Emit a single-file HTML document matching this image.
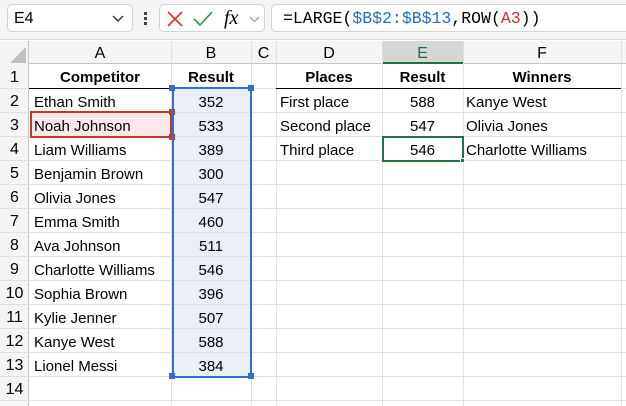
<!DOCTYPE html>
<html><head><meta charset="utf-8"><style>
body{margin:0;width:626px;height:406px;overflow:hidden;background:#fff;font-family:"Liberation Sans",sans-serif;position:relative}
.a{position:absolute;box-sizing:border-box}
.box{background:#fff;border:1px solid #d4d4d4;border-radius:5px}
.t{position:absolute;font-size:15px;line-height:24px;color:#000;white-space:nowrap}
.c{text-align:center}
.b{font-weight:bold}
</style></head><body>
<div class="a" style="left:0;top:0;width:626px;height:40px;background:#f5f5f5;border-bottom:1px solid #dcdcdc"></div>
<div class="a box" style="left:7px;top:4px;width:126px;height:28px"></div>
<div class="t" style="left:14px;top:7px;font-size:16px">E4</div>
<svg class="a" style="left:112px;top:15px" width="12" height="8"><path d="M1 1l5 5 5-5" stroke="#333" stroke-width="1.4" fill="none"/></svg>
<div class="a" style="left:144px;top:12px;width:3px;height:3px;background:#444;box-shadow:0 5px 0 #444,0 10px 0 #444"></div>
<div class="a box" style="left:159px;top:4px;width:106px;height:28px"></div>
<svg class="a" style="left:167px;top:11px" width="16" height="16"><path d="M1 1l14 14M15 1L1 15" stroke="#e03030" stroke-width="1.6"/></svg>
<svg class="a" style="left:193px;top:11px" width="20" height="15"><path d="M1 8l6 6L19 1" stroke="#2e9a48" stroke-width="1.6" fill="none"/></svg>
<div class="t" style="left:224px;top:6px;font-family:'Liberation Serif',serif;font-style:italic;font-size:20px">fx</div>
<svg class="a" style="left:249px;top:16px" width="11" height="7"><path d="M1 1l4.5 4.5L10 1" stroke="#999" stroke-width="1.2" fill="none"/></svg>
<div class="a box" style="left:271px;top:4px;width:360px;height:28px"></div>
<div class="t" style="left:283px;top:7px;font-size:16.5px;font-family:'Liberation Mono',monospace">=LARGE(<span style="color:#1f6fc8">$B$2:$B$13</span>,ROW(<span style="color:#c8323c">A3</span>))</div>

<div class="a" style="left:0;top:41px;width:626px;height:23px;background:#f5f5f5;border-bottom:1px solid #c6c6c6"></div>
<div class="a" style="left:0;top:41px;width:29px;height:365px;background:#f5f5f5;border-right:1px solid #c6c6c6"></div>
<svg class="a" style="left:10px;top:47px" width="16" height="16"><path d="M16 0V16H0Z" fill="#c0c0c0"/></svg>
<div class="a" style="left:382px;top:41px;width:81px;height:23px;background:#d6d6d6;border-bottom:2px solid #217346"></div>
<div id="g"></div>
<script>
var cols=[[29,171,'A'],[171,251,'B'],[251,276,'C'],[276,382,'D'],[382,463,'E'],[463,621,'F'],[621,700,'']];
var h='';
h+='<div class="a" style="left:172px;top:89px;width:80px;height:288px;background:#e9eef7"></div>';
h+='<div class="a" style="left:30px;top:113px;width:142px;height:24px;background:#fbe9ea"></div>';
for(var i=0;i<cols.length;i++){var c=cols[i];
 h+='<div class="t c" style="left:'+c[0]+'px;top:42px;width:'+(c[1]-c[0])+'px;line-height:23px;font-size:16px;color:'+(c[2]=='E'?'#217346':'#000')+'">'+c[2]+'</div>';
 h+='<div class="a" style="left:'+c[1]+'px;top:41px;width:1px;height:365px;background:#e0e0e0"></div>';}
for(var r=1;r<=14;r++){var y=64+24*r;
 h+='<div class="a" style="left:0;top:'+y+'px;width:626px;height:1px;background:#e0e0e0"></div>';
 h+='<div class="t c" style="left:0;top:'+(y-22)+'px;width:29px;font-size:16px">'+r+'</div>';}
var A=['Ethan Smith','Noah Johnson','Liam Williams','Benjamin Brown','Olivia Jones','Emma Smith','Ava Johnson','Charlotte Williams','Sophia Brown','Kylie Jenner','Kanye West','Lionel Messi'];
var B=[352,533,389,300,547,460,511,546,396,507,588,384];
h+='<div class="t c b" style="left:29px;top:66px;width:142px">Competitor</div><div class="t c b" style="left:171px;top:66px;width:80px">Result</div>';
h+='<div class="t c b" style="left:276px;top:66px;width:106px">Places</div><div class="t c b" style="left:382px;top:66px;width:81px">Result</div><div class="t c b" style="left:463px;top:66px;width:158px">Winners</div>';
for(var k=0;k<12;k++){var y=91+24*k;
 h+='<div class="t" style="left:34px;top:'+y+'px">'+A[k]+'</div><div class="t c" style="left:171px;top:'+y+'px;width:80px">'+B[k]+'</div>';}
var D=['First place','Second place','Third place'],E=[588,547,546],F=['Kanye West','Olivia Jones','Charlotte Williams'];
for(k=0;k<3;k++){var y=91+24*k;
 h+='<div class="t" style="left:280px;top:'+y+'px">'+D[k]+'</div><div class="t c" style="left:382px;top:'+y+'px;width:81px">'+E[k]+'</div><div class="t" style="left:466px;top:'+y+'px">'+F[k]+'</div>';}
h+='<div class="a" style="left:29px;top:88px;width:223px;height:1px;background:#000"></div>';
h+='<div class="a" style="left:276px;top:88px;width:345px;height:1px;background:#000"></div>';
h+='<div class="a" style="left:30px;top:111px;width:142px;height:27px;border:2px solid #c0392b"></div>';
h+='<div class="a" style="left:169px;top:109px;width:6px;height:6px;background:#c0392b"></div><div class="a" style="left:169px;top:134px;width:6px;height:6px;background:#c0392b"></div>';
h+='<div class="a" style="left:172px;top:87px;width:80px;height:291px;border:2px solid #2f6fd0"></div>';
h+='<div class="a" style="left:169px;top:85px;width:6px;height:6px;background:#2f6fd0"></div><div class="a" style="left:248px;top:85px;width:6px;height:6px;background:#2f6fd0"></div>';
h+='<div class="a" style="left:169px;top:373px;width:6px;height:6px;background:#2f6fd0"></div><div class="a" style="left:248px;top:373px;width:6px;height:6px;background:#2f6fd0"></div>';
h+='<div class="a" style="left:382px;top:136px;width:82px;height:26px;border:2px solid #217346"></div><div class="a" style="left:460px;top:158px;width:5px;height:5px;background:#217346;border:1px solid #fff"></div>';
document.getElementById('g').innerHTML=h;
</script>
</body></html>
